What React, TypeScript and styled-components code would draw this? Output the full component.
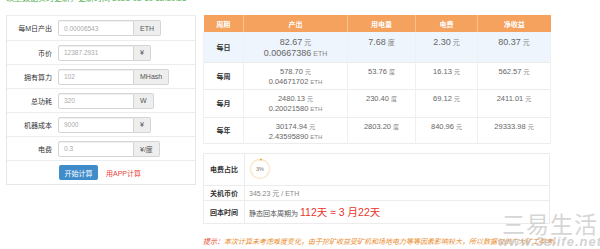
import React from 'react';
import styled, { createGlobalStyle } from 'styled-components';

const GlobalStyle = createGlobalStyle`
  body {
    margin: 0;
    background: #fff;
    overflow: hidden;
    font-family: "Liberation Sans", "Noto Sans CJK SC", sans-serif;
  }
`;

const Page = styled.div`
  position: relative;
  width: 600px;
  height: 249px;
  overflow: hidden;
  padding-left: 6px;
  box-sizing: border-box;
`;

const TopNote = styled.div`
  margin-top: -6px;
  height: 10px;
  font-size: 8px;
  line-height: 10px;
  color: #4cae4c;
  white-space: nowrap;
`;

const Columns = styled.div`
  display: flex;
  align-items: flex-start;
  gap: 7px;
  margin-top: 11px;
`;

const Panel = styled.div`
  width: 190px;
  border: 1px solid #e6e6e6;
  border-top-color: #ececec;
  box-sizing: border-box;
`;

const FormRow = styled.div`
  display: grid;
  grid-template-columns: 45px 1fr;
  align-items: center;
  height: 24px;
  box-sizing: border-box;
  & + & {
    border-top: 1px solid #ececec;
  }
`;

const Label = styled.div`
  text-align: right;
  font-size: 7px;
  color: #333;
  white-space: nowrap;
`;

const Field = styled.div`
  display: flex;
  align-items: center;
  padding-left: 6px;
`;

const Input = styled.input`
  width: 76px;
  height: 16px;
  box-sizing: border-box;
  border: 1px solid #d4d4d4;
  border-radius: 2px 0 0 2px;
  padding: 0 5px;
  font-family: inherit;
  font-size: 6.5px;
  color: #aaa;
  outline: none;
  box-shadow: inset 0 1px 1px rgba(0, 0, 0, 0.06);
  &::placeholder {
    color: #aaa;
  }
`;

const Addon = styled.span`
  height: 16px;
  box-sizing: border-box;
  display: flex;
  align-items: center;
  padding: 0 6px;
  border: 1px solid #d4d4d4;
  border-left: none;
  border-radius: 0 2px 2px 0;
  background: #eee;
  font-size: 7px;
  color: #555;
`;

const CalcButton = styled.button`
  height: 15px;
  width: 39px;
  padding: 0;
  border: none;
  border-radius: 2px;
  background: #3f8ccb;
  color: #fff;
  font-family: inherit;
  font-size: 7px;
  margin-left: 1px;
`;

const AppLink = styled.span`
  margin-left: 8px;
  font-size: 7px;
  color: #e8433a;
`;

const RightCol = styled.div`
  width: 347px;
  display: flex;
  flex-direction: column;
`;

const Table = styled.table`
  width: 347px;
  border-collapse: collapse;
  table-layout: fixed;
  color: #666;
`;

const HeadCell = styled.th`
  height: 17px;
  padding: 0;
  background: #f5a25e;
  color: #fff;
  font-size: 7px;
  font-weight: bold;
  border-left: 1px solid #f8c290;
  &:first-child {
    border-left: none;
  }
`;

const BodyRow = styled.tr<{ $hl?: boolean; $h: number }>`
  height: ${(p) => p.$h}px;
  background: ${(p) => (p.$hl ? '#eef5fc' : '#fff')};
  border-bottom: 1px solid #ececec;
`;

const PeriodCell = styled.td`
  text-align: center;
  vertical-align: middle;
  font-size: 7px;
  font-weight: bold;
  color: #333;
  padding: 0;
  border-left: 1px solid #f0f0f0;
`;

const ValueCell = styled.td<{ $big?: boolean }>`
  text-align: center;
  vertical-align: top;
  padding: ${(p) => (p.$big ? '5px' : '4px')} 0 0;
  font-size: ${(p) => (p.$big ? '9px' : '7.5px')};
  line-height: ${(p) => (p.$big ? '11px' : '10px')};
  border-left: 1px solid #f0f0f0;
  border-right: 1px solid #f0f0f0;
`;

const Unit = styled.span<{ $big?: boolean }>`
  font-size: ${(p) => (p.$big ? '7px' : '6px')};
  color: #888;
  margin-left: 2px;
`;

const Eth = styled.div<{ $big?: boolean }>`
  font-size: ${(p) => (p.$big ? '9px' : '7.5px')};
`;

const InfoTable = styled.table`
  width: 347px;
  margin-top: 9px;
  border-collapse: collapse;
  table-layout: fixed;
  border: 1px solid #ececec;
`;

const InfoRow = styled.tr<{ $h: number }>`
  height: ${(p) => p.$h}px;
  border-bottom: 1px solid #ececec;
`;

const InfoLabel = styled.td`
  width: 40px;
  text-align: center;
  font-size: 7px;
  font-weight: bold;
  color: #333;
  padding: 0;
  border-right: 1px solid #ececec;
`;

const InfoValue = styled.td`
  padding: 0 0 0 4px;
  font-size: 7px;
  color: #888;
  white-space: nowrap;
`;

const Dark = styled.span`
  color: #555;
`;

const Payback = styled.span`
  font-size: 10.5px;
  color: #e8352b;
  margin-left: 2px;
`;

const RingWrap = styled.div`
  width: 22px;
  height: 22px;
  position: relative;
  display: flex;
  align-items: center;
  justify-content: center;
  font-size: 5.5px;
  color: #777;
  svg {
    position: absolute;
    left: 0;
    top: 0;
  }
`;

const Tip = styled.div`
  margin-top: 12px;
  font-size: 7px;
  font-style: italic;
  color: #e98a2a;
  white-space: nowrap;
  b {
    font-weight: normal;
    color: #e5452d;
  }
`;

const Watermark = styled.div`
  position: absolute;
  right: -2px;
  bottom: 1px;
  display: flex;
  flex-direction: column;
  align-items: center;
  line-height: 1;
  pointer-events: none;
`;

const MarkTitle = styled.div`
  font-size: 23px;
  letter-spacing: 1px;
  color: rgba(200, 200, 200, 0.75);
  font-family: "Noto Sans CJK SC", sans-serif;
`;

const MarkUrl = styled.div`
  font-size: 13px;
  font-weight: bold;
  font-style: italic;
  letter-spacing: 1px;
  color: rgba(190, 190, 190, 0.7);
`;

const rows = [
  { p: '每日', yuan: '82.67', eth: '0.00667386', kwh: '7.68', fee: '2.30', net: '80.37', h: 30, hl: true },
  { p: '每周', yuan: '578.70', eth: '0.04671702', kwh: '53.76', fee: '16.13', net: '562.57', h: 27 },
  { p: '每月', yuan: '2480.13', eth: '0.20021580', kwh: '230.40', fee: '69.12', net: '2411.01', h: 28 },
  { p: '每年', yuan: '30174.94', eth: '2.43595890', kwh: '2803.20', fee: '840.96', net: '29333.98', h: 26 },
];

const fields = [
  { label: '每M日产出', value: '0.00006543', unit: 'ETH' },
  { label: '币价', value: '12387.2931', unit: '¥' },
  { label: '拥有算力', value: '102', unit: 'MHash' },
  { label: '总功耗', value: '320', unit: 'W' },
  { label: '机器成本', value: '9000', unit: '¥' },
  { label: '电费', value: '0.3', unit: '¥/度' },
];

const Ring = ({ pct }: { pct: number }) => {
  const r = 9.5;
  const c = 2 * Math.PI * r;
  return (
    <RingWrap>
      <svg width="22" height="22" viewBox="0 0 22 22">
        <circle cx="11" cy="11" r={r} fill="none" stroke="#fbe6cc" strokeWidth="1.4" />
        <circle
          cx="11"
          cy="11"
          r={r}
          fill="none"
          stroke="#f0a23c"
          strokeWidth="1.6"
          strokeDasharray={`${(c * pct) / 100} ${c}`}
          transform="rotate(-90 11 11)"
        />
      </svg>
      {pct}%
    </RingWrap>
  );
};

export default function App() {
  return (
    <Page>
      <GlobalStyle />
      <TopNote>以上数据实时更新，更新时间 2021-02-19 12:30:25</TopNote>
      <Columns>
        <Panel>
          {fields.map((f) => (
            <FormRow key={f.label}>
              <Label>{f.label}</Label>
              <Field>
                <Input placeholder={f.value} />
                <Addon>{f.unit}</Addon>
              </Field>
            </FormRow>
          ))}
          <FormRow>
            <Label />
            <Field>
              <CalcButton>开始计算</CalcButton>
              <AppLink>用APP计算</AppLink>
            </Field>
          </FormRow>
        </Panel>

        <RightCol>
          <Table>
            <colgroup>
              <col style={{ width: 40 }} />
              <col style={{ width: 104 }} />
              <col style={{ width: 68 }} />
              <col style={{ width: 62 }} />
              <col style={{ width: 73 }} />
            </colgroup>
            <thead>
              <tr>
                <HeadCell>周期</HeadCell>
                <HeadCell>产出</HeadCell>
                <HeadCell>用电量</HeadCell>
                <HeadCell>电费</HeadCell>
                <HeadCell>净收益</HeadCell>
              </tr>
            </thead>
            <tbody>
              {rows.map((r) => (
                <BodyRow key={r.p} $h={r.h} $hl={r.hl}>
                  <PeriodCell>{r.p}</PeriodCell>
                  <ValueCell $big={r.hl}>
                    {r.yuan}
                    <Unit $big={r.hl}>元</Unit>
                    <Eth $big={r.hl}>
                      {r.eth}
                      <Unit $big={r.hl}>ETH</Unit>
                    </Eth>
                  </ValueCell>
                  <ValueCell $big={r.hl}>
                    {r.kwh}
                    <Unit $big={r.hl}>度</Unit>
                  </ValueCell>
                  <ValueCell $big={r.hl}>
                    {r.fee}
                    <Unit $big={r.hl}>元</Unit>
                  </ValueCell>
                  <ValueCell $big={r.hl}>
                    {r.net}
                    <Unit $big={r.hl}>元</Unit>
                  </ValueCell>
                </BodyRow>
              ))}
            </tbody>
          </Table>

          <InfoTable>
            <tbody>
              <InfoRow $h={32}>
                <InfoLabel>电费占比</InfoLabel>
                <InfoValue>
                  <Ring pct={3} />
                </InfoValue>
              </InfoRow>
              <InfoRow $h={15}>
                <InfoLabel>关机币价</InfoLabel>
                <InfoValue>345.23 元 / ETH</InfoValue>
              </InfoRow>
              <InfoRow $h={23}>
                <InfoLabel>回本时间</InfoLabel>
                <InfoValue>
                  <Dark>静态回本周期为</Dark>
                  <Payback>112天 ≈ 3 月22天</Payback>
                </InfoValue>
              </InfoRow>
            </tbody>
          </InfoTable>

          <Tip>
            <b>提示：</b>本次计算未考虑难度变化，由于挖矿收益受矿机和场地电力等等因素影响较大，所以数据仅供广大矿工参考。
          </Tip>
        </RightCol>
      </Columns>
      <Watermark>
        <MarkTitle>三易生活</MarkTitle>
        <MarkUrl>www.3elife.net</MarkUrl>
      </Watermark>
    </Page>
  );
}
